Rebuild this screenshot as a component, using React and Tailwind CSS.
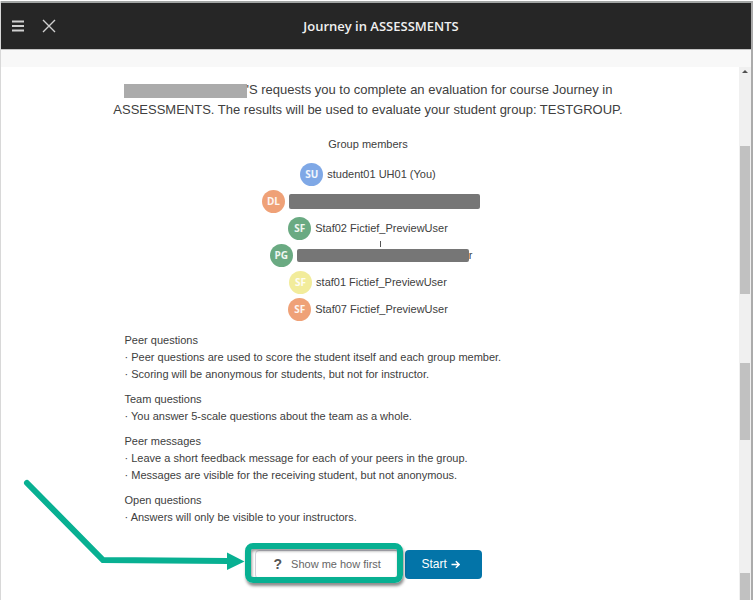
import clsx from "clsx";

const members = [
  { initials: "SU", name: "student01 UH01 (You)", color: "bg-[#7fa8e6]" },
  { initials: "DL", color: "bg-[#efa177]", bar: "h-[15px] w-[191px]" },
  { initials: "SF", name: "Staf02 Fictief_PreviewUser", color: "bg-[#6aaa82]" },
  { initials: "PG", color: "bg-[#6aaa82]", bar: "h-[13px] w-[172px]", tail: "r" },
  { initials: "SF", name: "staf01 Fictief_PreviewUser", color: "bg-[#f2ec9b]" },
  { initials: "SF", name: "Staf07 Fictief_PreviewUser", color: "bg-[#efa177]" },
];

const sections = [
  {
    title: "Peer questions",
    items: [
      "Peer questions are used to score the student itself and each group member.",
      "Scoring will be anonymous for students, but not for instructor.",
    ],
  },
  {
    title: "Team questions",
    items: ["You answer 5-scale questions about the team as a whole."],
  },
  {
    title: "Peer messages",
    items: [
      "Leave a short feedback message for each of your peers in the group.",
      "Messages are visible for the receiving student, but not anonymous.",
    ],
  },
  {
    title: "Open questions",
    items: ["Answers will only be visible to your instructors."],
  },
];

function Header() {
  return (
    <header className="flex h-[49px] items-center border-t-2 border-b border-t-[#a3a6a5] border-b-[#c4c4c4] bg-[#262626] pl-[10px] text-[#d0d0d0]">
      <div className="flex flex-1 items-center gap-[17px]">
        <button aria-label="Menu">
          <svg width="14" height="14" viewBox="0 0 14 14" stroke="currentColor" strokeWidth="2">
            <path d="M1 2.500h12M1 7h12M1 11.500h12" />
          </svg>
        </button>
        <button aria-label="Close">
          <svg width="14" height="14" viewBox="0 0 14 14" stroke="currentColor" strokeWidth="1.4">
            <path d="M1 1l12 12M13 1L1 13" />
          </svg>
        </button>
      </div>
      <h1 className="text-[13px] font-semibold text-[#f0f0f0] font-['Open_Sans',sans-serif]">Journey in ASSESSMENTS</h1>
      <div className="flex-1" />
    </header>
  );
}

function Member({ member }) {
  return (
    <li className={clsx("flex h-[27px] items-center gap-1", member.bar && "pl-1.5")}>
      <span
        className={clsx(
          "flex size-[23px] items-center justify-center rounded-full text-[10px] font-bold text-white/90 font-['Open_Sans',sans-serif]",
          member.color
        )}
      >
        {member.initials}
      </span>
      {member.name && <span>{member.name}</span>}
      {member.bar && (
        <span className="relative flex items-center">
          <span className={clsx("rounded-xs bg-[#767676]", member.bar)} />
          {member.tail && (
            <>
              <span>{member.tail}</span>
              <span className="absolute -top-[6px] left-[83px] h-[6px] w-px bg-[#555]" />
            </>
          )}
        </span>
      )}
    </li>
  );
}

/* Scroll track with the stacked thumbs */
function ScrollTrack() {
  return (
    <div className="flex w-3 flex-col items-center bg-[#f0f0f0]">
      <div className="flex h-[79px] pt-[3px]">
        <svg width="6" height="3" viewBox="0 0 6 3" fill="#505050">
          <path d="M3 0l3 3H0z" />
        </svg>
      </div>
      <div className="h-[148px] w-[10px] bg-[#c1c1c1]" />
      <div className="h-[69px]" />
      <div className="h-[77px] w-[10px] bg-[#c1c1c1]" />
      <div className="h-[133px]" />
      <div className="h-[27px] w-[10px] bg-[#c1c1c1]" />
    </div>
  );
}

function Actions() {
  return (
    <div className="mt-6 flex justify-center gap-[5px]">
      <div className="relative">
        <button className="flex h-[29px] w-[145px] items-center gap-[9px] rounded-sm border border-[#d0d0da] bg-white pl-[18px] text-[#666]">
          <span className="text-[14px] font-bold text-[#555]">?</span>
          Show me how first
        </button>
        {/* Callout frame and pointer */}
        <div className="pointer-events-none absolute -top-[7px] -right-[3px] -bottom-[4px] -left-[10px] rounded-lg border-[6px] border-[#08b092] shadow-[1px_3px_3px_rgba(0,0,0,0.45),inset_1px_2px_3px_rgba(0,0,0,0.4)]" />
        <svg
          className="pointer-events-none absolute right-full -bottom-px mr-[10px]"
          width="225"
          height="103"
          viewBox="20 477 225 103"
          fill="none"
        >
          <path d="M27 483L103 560L228 561" stroke="#08b092" strokeWidth="6" strokeLinecap="round" />
          <path d="M227 552.500L244.500 561.500L227 570z" fill="#08b092" />
        </svg>
      </div>
      <button className="flex h-[29px] w-[77px] items-center gap-1 rounded-sm bg-[#0374a8] pl-[17px] text-[12px] text-white">
        Start
        <svg width="9" height="9" viewBox="0 0 9 9" fill="none" stroke="currentColor" strokeWidth="1.4">
          <path d="M0.500 4.500h7.500M4.800 1.200l3.400 3.300-3.400 3.300" />
        </svg>
      </button>
    </div>
  );
}

function App() {
  return (
    <div className="bg-white pt-px pr-[3px] font-['Liberation_Sans',Arial,sans-serif] text-[11px] leading-[17px] text-[#404040]">
      <div className="border-r-2 border-l border-r-[#ababab] border-l-[#d8d8d8]">
        <Header />
        <div className="h-[17px] bg-[#f8f8f8]" />
        <div className="flex">
          <main className="min-w-0 flex-1 pt-[13px] pr-1">
            <p className="mx-auto max-w-[530px] text-center text-[13px] leading-5">
              <span className="inline-block h-[14px] w-[123px] bg-[#ababab] align-middle" />
              'S requests you to complete an evaluation for course Journey in ASSESSMENTS. The results will be used to
              evaluate your student group: TESTGROUP.
            </p>

            <h2 className="mt-4 text-center">Group members</h2>
            <ul className="mt-2 flex flex-col items-center">
              {members.map((member, i) => (
                <Member key={i} member={member} />
              ))}
            </ul>

            <div className="mx-auto mt-[9px] flex max-w-[487px] flex-col gap-2">
              {sections.map((section) => (
                <section key={section.title}>
                  <h3>{section.title}</h3>
                  <ul>
                    {section.items.map((item) => (
                      <li key={item}>· {item}</li>
                    ))}
                  </ul>
                </section>
              ))}
            </div>

            <Actions />
          </main>
          <ScrollTrack />
        </div>
      </div>
    </div>
  );
}

export default App;
